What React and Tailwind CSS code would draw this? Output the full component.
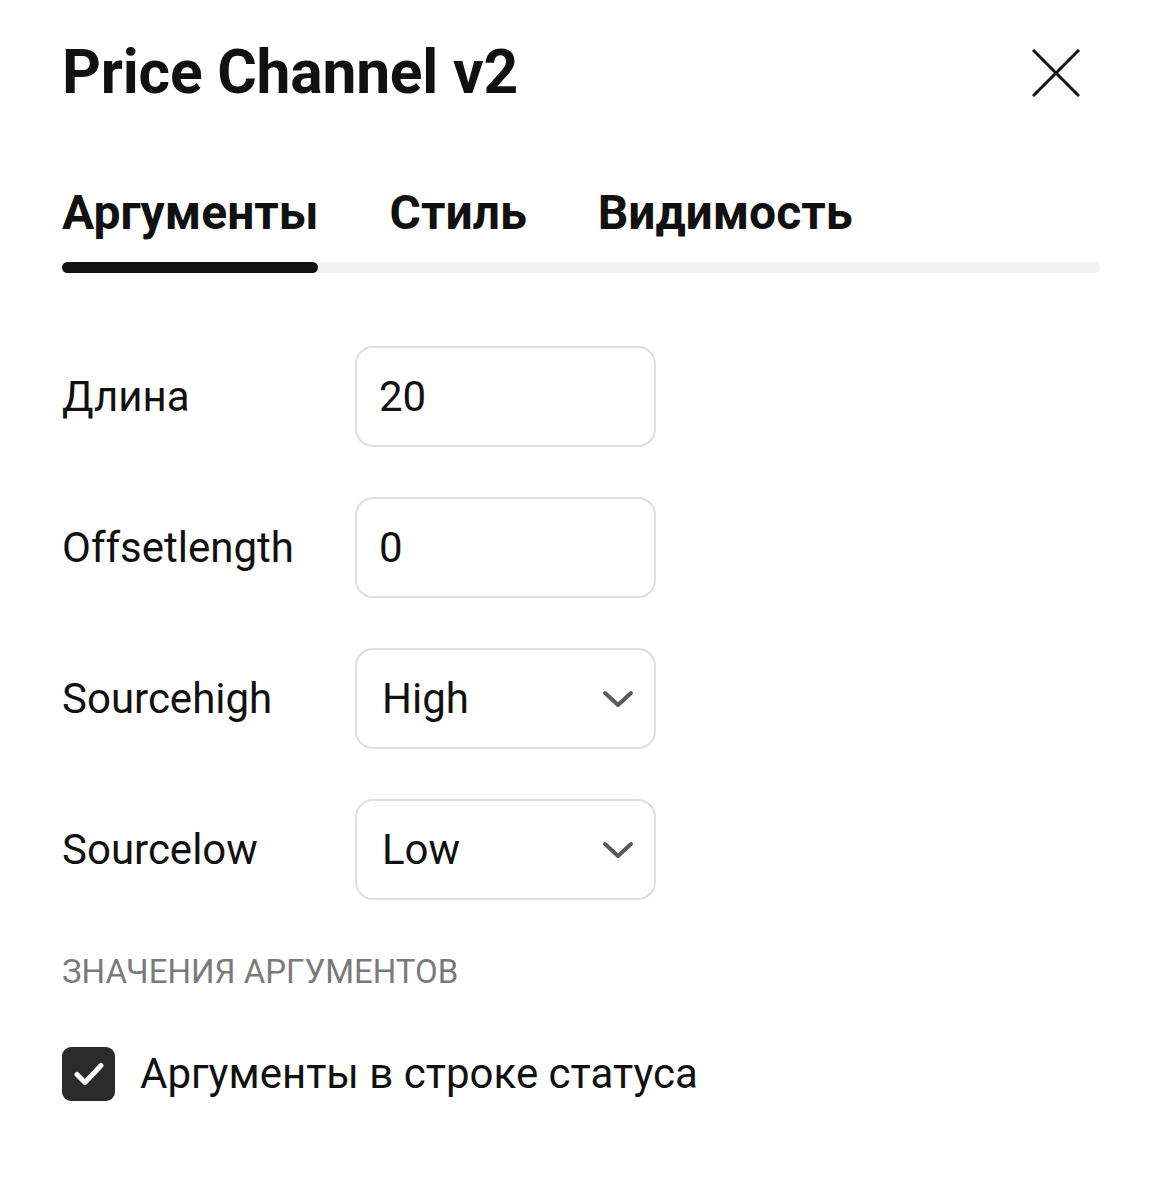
import React, { useState } from 'react'

const tabs = ['Аргументы', 'Стиль', 'Видимость']

const fields = [
  { label: 'Длина', value: '20', type: 'input' },
  { label: 'Offsetlength', value: '0', type: 'input' },
  { label: 'Sourcehigh', value: 'High', type: 'select' },
  { label: 'Sourcelow', value: 'Low', type: 'select' },
]

const Chevron = () => (
  <svg width="32" height="20" viewBox="0 0 32 20" fill="none">
    <path d="M3 4l13 12L29 4" stroke="#5a5a5a" strokeWidth="4" strokeLinecap="round" strokeLinejoin="round" />
  </svg>
)

export default function App() {
  const [active, setActive] = useState(0)
  const [checked, setChecked] = useState(true)

  return (
    <div className="w-[1160px] h-[1200px] bg-white text-[#111] font-['Roboto',sans-serif]">
      <div className="pl-[62px] pr-[60px] pt-[23px]">
        {/* header */}
        <div className="flex items-center justify-between h-[100px]">
          <h1 className="text-[60.5px] font-bold leading-none tracking-[-0.2px]">Price Channel v2</h1>
          <button className="w-[56px] h-[56px] flex items-center justify-center mr-[16px]">
            <svg width="48" height="48" viewBox="0 0 48 48" fill="none">
              <path d="M1 1l46 46M47 1L1 47" stroke="#111" strokeWidth="3" />
            </svg>
          </button>
        </div>

        {/* tabs */}
        <div className="mt-[62px]">
          <div className="flex gap-[71px] h-[56px] items-center">
            {tabs.map((t, i) => (
              <button
                key={t}
                onClick={() => setActive(i)}
                className="text-[48px] font-bold leading-none"
              >
                {t}
              </button>
            ))}
          </div>
          <div className="mt-[21px] h-[11px] rounded-full bg-[#f1f1f1]">
            <div className="h-[11px] w-[256px] rounded-full bg-[#111]" />
          </div>
        </div>

        {/* fields */}
        <div className="mt-[73px] flex flex-col gap-[50px]">
          {fields.map(f => (
            <div key={f.label} className="flex items-center">
              <div className="w-[293px] text-[42px] leading-none">{f.label}</div>
              <div className="w-[301px] h-[101px] rounded-[18px] border-2 border-[#dedede] flex items-center justify-between pl-[22px] pr-[20px]">
                <span className={`text-[42px] leading-none ${f.type === 'select' ? 'pl-[3px]' : ''}`}>{f.value}</span>
                {f.type === 'select' && <Chevron />}
              </div>
            </div>
          ))}
        </div>

        {/* section */}
        <div className="mt-[55px] text-[33px] leading-none text-[#7a7a7a] uppercase">Значения аргументов</div>

        <label className="mt-[59px] flex items-center gap-[25px] cursor-pointer">
          <button
            onClick={() => setChecked(c => !c)}
            className="w-[53px] h-[54px] rounded-[9px] bg-[#2b2b2b] flex items-center justify-center"
          >
            {checked && (
              <svg width="30" height="26" viewBox="0 0 30 26" fill="none">
                <path d="M3 13.5l8 8L27 4.5" stroke="#fff" strokeWidth="5" strokeLinecap="round" strokeLinejoin="round" />
              </svg>
            )}
          </button>
          <span className="text-[42px] leading-none">Аргументы в строке статуса</span>
        </label>
      </div>
    </div>
  )
}
